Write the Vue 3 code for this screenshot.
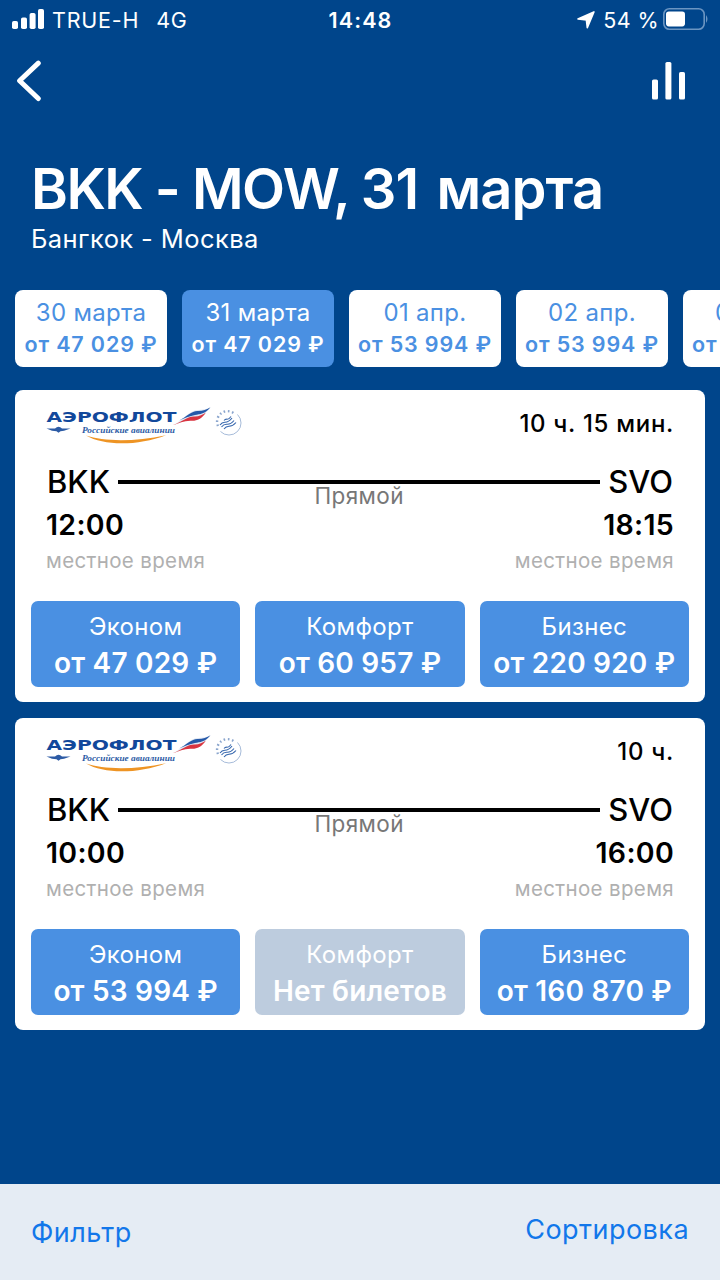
<template>
  <div class="screen">
    <div class="status">
      <div class="status-side">
        <svg class="signal" width="32" height="20" viewBox="0 0 32 20">
          <rect x="0" y="12" width="6" height="8" rx="1.8" />
          <rect x="9" y="8.5" width="6" height="11.5" rx="1.8" />
          <rect x="17.6" y="4" width="6" height="16" rx="1.8" />
          <rect x="26" y="0" width="6" height="20" rx="1.8" />
        </svg>
        <span class="carrier">TRUE-H</span>
        <span class="network">4G</span>
      </div>
      <span class="clock">14:48</span>
      <div class="status-side right">
        <svg class="location" width="18" height="18" viewBox="0 0 18 18">
          <path d="M16.9 0.9 L10.3 16.6 L9.4 8.9 L1 7.9 Z" />
        </svg>
        <span class="percent">54 %</span>
        <svg class="battery" width="46" height="22" viewBox="0 0 46 22">
          <rect class="shell" x="0.8" y="0.8" width="40.4" height="20.4" rx="5.6" />
          <rect class="charge" x="3" y="3.4" width="19" height="15" rx="2.8" />
          <path class="cap" d="M43 7 Q46 11 43 15 Z" />
        </svg>
      </div>
    </div>

    <div class="nav">
      <svg width="26" height="42" viewBox="0 0 26 42">
        <path class="back" d="M22.3 3.1 L3.6 20.8 L22.3 38.5" />
      </svg>
      <svg width="34" height="38" viewBox="0 0 34 38">
        <rect x="0" y="17.5" width="6" height="20" rx="1.6" />
        <rect x="13.4" y="0" width="6" height="37.5" rx="1.6" />
        <rect x="27" y="10" width="6" height="27.5" rx="1.6" />
      </svg>
    </div>

    <h1 class="title">BKK - MOW, <span class="title-date">{{ selected }}</span></h1>
    <div class="subtitle">Бангкок - Москва</div>

    <div class="dates">
      <div v-for="d in dates" :key="d.day" class="date" :class="{ active: d.day === selected }" @click="selected = d.day">
        <span class="date-day">{{ d.day }}</span>
        <span class="date-price">{{ d.price }}</span>
      </div>
    </div>

    <div class="flights">
      <div v-for="f in flights" :key="f.departure" class="flight">
        <div class="flight-head">
          <svg class="logo" width="200" height="44" viewBox="0 0 200 44">
            <text class="logo-name" x="0.5" y="19.7" textLength="130" lengthAdjust="spacingAndGlyphs">АЭРОФЛОТ</text>
            <text class="logo-sub" x="36" y="30.6" textLength="93" lengthAdjust="spacingAndGlyphs">Российские авиалинии</text>
            <path class="wings" d="M0.5 26.6 H9 Q12.5 23 16 26.6 H24.5 L18 28.8 L14.5 29.2 L12.5 30.7 L10.5 29.2 L6 28.8 Z" />
            <path class="arc" d="M40 33.6 C58 39.5 88 40 120 33.2 C92 44 58 44 40 33.6 Z" />
            <path class="flag-white" d="M128 22.5 C138 18 143 8 152 8 C157 8 161 7 164.5 5.2 C157 14 153 17 146 17.5 C139 18 135 20 128 22.5 Z" />
            <path class="flag-blue" d="M133 18.5 C141 14.5 146 8.500 152 9 C157 9 161 7.500 164.500 5.200 C159 12 154 12 149 13 C142 14.500 138 16.500 133 18.500 Z" />
            <path class="flag-red" d="M127 23 C137 19.500 142 14 149 14.500 C153 14.500 157 12.500 160 10.500 C155 17.500 151 19 145 18.700 C138 18.500 133 21.500 127 23 Z" />
            <path class="sky-ring" d="M191.500 12.500 A11.200 11.200 0 0 1 174.500 29.500" />
            <path class="sky-text" d="M172 24 A10.500 10.500 0 0 1 187.500 11" />
            <path class="sky-wave" d="M174 23 C178 17 180 24 186 16 M175.500 25 C180 19 182 26 188 18.500 M178 27 C182 21.500 184 27.500 190 20.500 M178 18.500 C181 15 181 20 185 14.500" />
          </svg>
          <span class="duration">{{ f.duration }}</span>
        </div>

        <div class="route">
          <span>BKK</span>
          <div class="route-line">
            <span class="route-type">Прямой</span>
          </div>
          <span>SVO</span>
        </div>

        <div class="times">
          <span>{{ f.departure }}</span>
          <span>{{ f.arrival }}</span>
        </div>
        <div class="local">
          <span>местное время</span>
          <span>местное время</span>
        </div>

        <div class="fares">
          <div v-for="fare in f.fares" :key="fare.name" class="fare" :class="{ disabled: fare.soldOut }">
            <span class="fare-name">{{ fare.name }}</span>
            <span class="fare-price">{{ fare.price }}</span>
          </div>
        </div>
      </div>
    </div>

    <div class="toolbar">
      <span class="filter">Фильтр</span>
      <span class="sort">Сортировка</span>
    </div>
  </div>
</template>

<script setup>
import { ref } from 'vue'

const selected = ref('31 марта')

const dates = [
  { day: '30 марта', price: 'от 47 029 ₽' },
  { day: '31 марта', price: 'от 47 029 ₽' },
  { day: '01 апр.', price: 'от 53 994 ₽' },
  { day: '02 апр.', price: 'от 53 994 ₽' },
  { day: '03 апр.', price: 'от 53 994 ₽' },
]

const flights = [
  {
    departure: '12:00',
    arrival: '18:15',
    duration: '10 ч. 15 мин.',
    fares: [
      { name: 'Эконом', price: 'от 47 029 ₽' },
      { name: 'Комфорт', price: 'от 60 957 ₽' },
      { name: 'Бизнес', price: 'от 220 920 ₽' },
    ],
  },
  {
    departure: '10:00',
    arrival: '16:00',
    duration: '10 ч.',
    fares: [
      { name: 'Эконом', price: 'от 53 994 ₽' },
      { name: 'Комфорт', price: 'Нет билетов', soldOut: true },
      { name: 'Бизнес', price: 'от 160 870 ₽' },
    ],
  },
]
</script>

<style>
body {
  margin: 0;
  background: #00458b;
}
</style>

<style scoped>
.screen {
  display: flex;
  flex-direction: column;
  width: 720px;
  height: 1280px;
  overflow: hidden;
  background: #00458b;
  color: #fff;
  font-family: Inter, "Liberation Sans", sans-serif;
  white-space: nowrap;
}
svg {
  display: block;
  flex: none;
  fill: #fff;
}

/* status bar */
.status {
  display: flex;
  align-items: center;
  height: 40px;
  padding: 0 11px 0 12px;
  font-size: 21.5px;
  line-height: 40px;
}
.status-side {
  display: flex;
  flex: 1;
  align-items: center;
}
.status-side.right {
  justify-content: flex-end;
}
.signal {
  margin-top: -2px;
}
.carrier {
  margin-left: 8px;
  letter-spacing: 0.8px;
}
.network {
  margin-left: 17px;
  letter-spacing: 0.5px;
}
.clock {
  font-weight: 600;
  letter-spacing: 1.1px;
}
.location {
  margin-right: 8px;
  stroke: #fff;
  stroke-width: 1.6;
  stroke-linejoin: round;
}
.percent {
  margin-right: 4px;
  letter-spacing: 0.4px;
}
.battery {
  margin-top: -2px;
}
.shell {
  fill: none;
  stroke: #6b95c2;
  stroke-width: 1.6;
}
.cap {
  fill: #6b95c2;
}

.nav {
  display: flex;
  justify-content: space-between;
  align-items: center;
  height: 82px;
  padding: 0 34px 0 16px;
}
.back {
  fill: none;
  stroke: #fff;
  stroke-width: 5;
  stroke-linecap: round;
  stroke-linejoin: round;
}

.title {
  margin: 33px 0 0 31px;
  font-size: 56px;
  font-weight: 600;
  line-height: 68px;
  letter-spacing: -1.5px;
}
.title-date {
  letter-spacing: -0.9px;
  word-spacing: 5px;
}
.subtitle {
  margin: 0 0 0 31px;
  font-size: 25.5px;
  line-height: 31px;
  letter-spacing: 0.4px;
}

.dates {
  display: flex;
  gap: 15px;
  margin: 36px 0 0 15px;
}
.date {
  display: flex;
  flex: none;
  flex-direction: column;
  align-items: center;
  box-sizing: border-box;
  width: 152px;
  height: 77px;
  padding-top: 7px;
  border-radius: 8px;
  background: #fff;
  color: #4a90e2;
}
.date.active {
  background: #4a90e2;
  color: #fff;
}
.date-day {
  font-size: 24px;
  line-height: 32px;
  letter-spacing: 0.3px;
}
.date-price {
  font-size: 21.5px;
  font-weight: 600;
  line-height: 30px;
  letter-spacing: 0.85px;
}

/* flight cards */
.flights {
  display: flex;
  flex: 1;
  flex-direction: column;
  gap: 16px;
  padding: 23px 15px 0;
}
.flight {
  box-sizing: border-box;
  height: 312px;
  padding: 0 16px;
  border-radius: 8px;
  background: #fff;
  color: #000;
}
.flight-head {
  display: flex;
  justify-content: space-between;
  height: 66px;
  padding: 12px 15px 0 15px;
  box-sizing: border-box;
}
.duration {
  font-size: 24px;
  font-weight: 500;
  line-height: 44px;
  letter-spacing: 0.7px;
}
.logo-name {
  fill: #12489b;
  font: bold 13.5px "DejaVu Sans", sans-serif;
}
.logo-sub {
  fill: #2c5ba5;
  font: italic bold 8px "Liberation Serif", serif;
}
.wings {
  fill: #2c5ba5;
}
.arc {
  fill: #ee9424;
}
.flag-white {
  fill: #dfe6f2;
}
.flag-blue {
  fill: #2458a8;
}
.flag-red {
  fill: #d93440;
}
.sky-ring {
  fill: none;
  stroke: #7f9dc8;
  stroke-width: 0.7;
}
.sky-text {
  fill: none;
  stroke: #8aa5cd;
  stroke-width: 2.4;
  stroke-dasharray: 1.6 2.6;
}
.sky-wave {
  fill: none;
  stroke: #3566ad;
  stroke-width: 1.1;
}
.route {
  display: flex;
  gap: 8px;
  padding: 0 16px;
  font-size: 31px;
  font-weight: 500;
  line-height: 52px;
}
.route-line {
  position: relative;
  flex: 1;
  height: 3.5px;
  margin-top: 24px;
  background: #000;
}
.route-type {
  position: absolute;
  top: 4px;
  left: 0;
  right: 0;
  color: #777;
  font-size: 22.5px;
  font-weight: 400;
  line-height: 24px;
  letter-spacing: 0.4px;
  text-align: center;
}
.times,
.local {
  display: flex;
  justify-content: space-between;
  padding: 0 15px;
}
.times {
  font-size: 28.5px;
  font-weight: 600;
  line-height: 34px;
  letter-spacing: 0.3px;
}
.local {
  color: #b0b0b0;
  font-size: 20.5px;
  line-height: 37px;
  letter-spacing: 0.35px;
}
.fares {
  display: flex;
  gap: 15px;
  margin-top: 22px;
}
.fare {
  display: flex;
  flex: 1;
  flex-direction: column;
  align-items: center;
  box-sizing: border-box;
  height: 86px;
  padding-top: 9px;
  border-radius: 7px;
  background: #4a90e2;
  color: #fff;
}
.fare.disabled {
  background: #bdccde;
}
.fare-name {
  font-size: 24px;
  line-height: 34px;
  letter-spacing: 0.35px;
}
.fare-price {
  font-size: 28px;
  font-weight: 600;
  line-height: 38px;
  letter-spacing: 0.2px;
}

.toolbar {
  display: flex;
  justify-content: space-between;
  box-sizing: border-box;
  height: 96px;
  padding: 0 31px;
  background: #e5ecf4;
  color: #1277ea;
  font-size: 27px;
  letter-spacing: 0.45px;
}
.filter {
  line-height: 98px;
}
.sort {
  line-height: 91px;
}
</style>
